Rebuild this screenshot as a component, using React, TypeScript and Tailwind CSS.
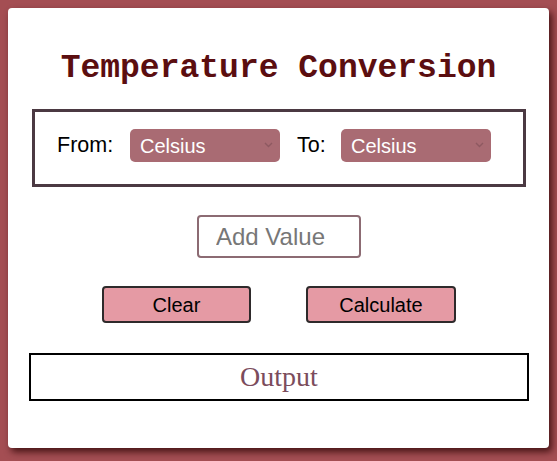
import { useState } from "react";

const units = ["Celsius", "Fahrenheit", "Kelvin"];

function UnitSelect({ value, onChange }: { value: string; onChange: (v: string) => void }) {
  return (
    <div className="relative w-[150px] h-[33px]">
      <select
        value={value}
        onChange={(e) => onChange(e.target.value)}
        className="appearance-none w-full h-full rounded-[5px] bg-[#a96b73] text-white text-[20px] pl-[10px] pr-6 outline-none"
        style={{ fontFamily: "Arial, 'Liberation Sans', sans-serif" }}
      >
        {units.map((u) => (
          <option key={u} value={u} className="text-black bg-white">
            {u}
          </option>
        ))}
      </select>
      <svg
        className="absolute right-[7px] top-[13px] pointer-events-none"
        width="9"
        height="6"
        viewBox="0 0 9 6"
        fill="none"
      >
        <path d="M1 1l3.5 3.5L8 1" stroke="#8e5961" strokeWidth="1.4" />
      </svg>
    </div>
  );
}

export default function App() {
  const [from, setFrom] = useState("Celsius");
  const [to, setTo] = useState("Celsius");
  const [value, setValue] = useState("");
  const [output, setOutput] = useState("Output");

  const calculate = () => {
    const n = parseFloat(value);
    if (isNaN(n)) return;
    let c = n;
    if (from === "Fahrenheit") c = ((n - 32) * 5) / 9;
    if (from === "Kelvin") c = n - 273.15;
    let r = c;
    if (to === "Fahrenheit") r = (c * 9) / 5 + 32;
    if (to === "Kelvin") r = c + 273.15;
    setOutput(r.toFixed(2));
  };

  return (
    <div
      className="min-h-[461px] bg-[#a44e53] p-[8px]"
      style={{ fontFamily: "Arial, 'Liberation Sans', sans-serif" }}
    >
      <div className="w-[541px] h-[440px] bg-white rounded-[4px] shadow-[3px_4px_7px_rgba(40,0,0,0.75)] pt-[42px]">
        <h1
          className="text-center text-[33px] leading-[38px] font-bold text-[#5b0e10]"
          style={{ fontFamily: "'Courier New', 'Liberation Mono', monospace" }}
        >
          Temperature Conversion
        </h1>

        {/* Units */}
        <div className="mt-[21px] ml-[24px] w-[494px] h-[78px] border-[3px] border-[#4b3942] flex items-center pl-[22px] pb-[5px]">
          <span className="w-[52px] whitespace-nowrap text-[21.5px] text-black">From:</span>
          <div className="ml-[21px]">
            <UnitSelect value={from} onChange={setFrom} />
          </div>
          <span className="w-[29px] ml-[17px] whitespace-nowrap text-[21.5px] text-black">To:</span>
          <div className="ml-[15px]">
            <UnitSelect value={to} onChange={setTo} />
          </div>
        </div>

        {/* Value */}
        <div className="mt-[28px] flex justify-center pl-[1px]">
          <input
            value={value}
            onChange={(e) => setValue(e.target.value)}
            placeholder="Add Value"
            className="w-[164px] h-[43px] border-2 border-[#8c6b73] rounded-[4px] pl-[17px] text-[24px] text-black placeholder:text-[#777777] outline-none"
          />
        </div>

        {/* Buttons */}
        <div className="mt-[28px] flex ml-[94px] gap-[55px]">
          <button
            onClick={() => {
              setValue("");
              setOutput("Output");
            }}
            className="w-[149px] h-[37px] bg-[#e59aa4] border-2 border-[#2e2a2b] rounded-[4px] text-[20px] text-black"
          >
            Clear
          </button>
          <button
            onClick={calculate}
            className="w-[150px] h-[37px] bg-[#e59aa4] border-2 border-[#2e2a2b] rounded-[4px] text-[20px] text-black"
          >
            Calculate
          </button>
        </div>

        {/* Output */}
        <div
          className="mt-[30px] ml-[21px] w-[500px] h-[48px] border-2 border-black flex items-center justify-center text-[28px] text-[#7b4c5c]"
          style={{ fontFamily: "'Times New Roman', 'Liberation Serif', serif" }}
        >
          {output}
        </div>
      </div>
    </div>
  );
}
